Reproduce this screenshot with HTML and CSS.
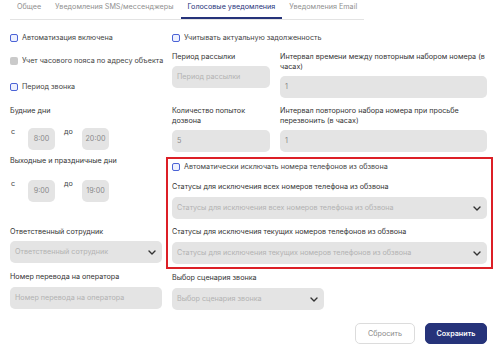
FILE: index.html
```html
<!DOCTYPE html>
<html lang="ru">
<head>
<meta charset="utf-8">
<link rel="stylesheet" href="styles.css">
</head>
<body>
<div class="page">
  <nav class="tabs">
    <div class="tab">Общее</div>
    <div class="tab">Уведомления SMS/мессенджеры</div>
    <div class="tab active">Голосовые уведомления</div>
    <div class="tab">Уведомления Email</div>
  </nav>

  <div class="content">
    <div class="col-left">
      <label class="cb-row r1"><span class="cb"></span>Автоматизация включена</label>
      <label class="cb-row r2"><span class="cb disabled"></span>Учет часового пояса по адресу объекта</label>
      <label class="cb-row r3"><span class="cb"></span>Период звонка</label>

      <div class="lbl days1">Будние дни</div>
      <div class="time-row tr1">
        <span class="t-lbl">с</span>
        <div class="time-box">8:00</div>
        <span class="t-lbl to">до</span>
        <div class="time-box">20:00</div>
      </div>

      <div class="lbl days2">Выходные и праздничные дни</div>
      <div class="time-row tr2">
        <span class="t-lbl">с</span>
        <div class="time-box">9:00</div>
        <span class="t-lbl to">до</span>
        <div class="time-box">19:00</div>
      </div>

      <div class="lbl resp">Ответственный сотрудник</div>
      <div class="field select">
        <span class="ph">Ответственный сотрудник</span>
        <svg class="chev" viewBox="0 0 8 5" width="8" height="5"><path d="M1 1 L4 4 L7 1" /></svg>
      </div>

      <div class="lbl oper">Номер перевода на оператора</div>
      <div class="field"><span class="ph">Номер перевода на оператора</span></div>
    </div>

    <div class="col-right">
      <label class="cb-row r1"><span class="cb"></span>Учитывать актуальную задолженность</label>

      <div class="pair rowA">
        <div class="fld">
          <div class="lbl">Период рассылки</div>
          <div class="field"><span class="ph">Период рассылки</span></div>
        </div>
        <div class="fld">
          <div class="lbl">Интервал времени между повторным набором номера (в часах)</div>
          <div class="field"><span class="val">1</span></div>
        </div>
      </div>

      <div class="pair rowB">
        <div class="fld">
          <div class="lbl">Количество попыток дозвона</div>
          <div class="field"><span class="val">5</span></div>
        </div>
        <div class="fld">
          <div class="lbl">Интервал повторного набора номера при просьбе перезвонить (в часах)</div>
          <div class="field"><span class="val">1</span></div>
        </div>
      </div>

      <div class="highlight">
        <label class="cb-row hl-cb"><span class="cb"></span>Автоматически исключать номера телефонов из обзвона</label>
        <div class="lbl hl-l1">Статусы для исключения всех номеров телефона из обзвона</div>
        <div class="field select">
          <span class="ph">Статусы для исключения всех номеров телефона из обзвона</span>
          <svg class="chev" viewBox="0 0 8 5" width="8" height="5"><path d="M1 1 L4 4 L7 1" /></svg>
        </div>
        <div class="lbl hl-l2">Статусы для исключения текущих номеров телефонов из обзвона</div>
        <div class="field select">
          <span class="ph">Статусы для исключения текущих номеров телефонов из обзвона</span>
          <svg class="chev" viewBox="0 0 8 5" width="8" height="5"><path d="M1 1 L4 4 L7 1" /></svg>
        </div>
      </div>

      <div class="lbl scen">Выбор сценария звонка</div>
      <div class="field select narrow">
        <span class="ph">Выбор сценария звонка</span>
        <svg class="chev" viewBox="0 0 8 5" width="8" height="5"><path d="M1 1 L4 4 L7 1" /></svg>
      </div>
    </div>
  </div>

  <div class="actions">
    <button class="btn btn-reset">Сбросить</button>
    <button class="btn btn-save">Сохранить</button>
  </div>
</div>
</body>
</html>
```

FILE: styles.css
```css
* { box-sizing: border-box; }

html, body {
  margin: 0;
  padding: 0;
  background: #ffffff;
}

body {
  font-family: Inter, "Noto Sans", "DejaVu Sans", sans-serif;
  font-size: 7.2px;
  line-height: 10px;
  color: #333333;
}

.page {
  padding: 0 12px 0 10px;
}

/* Tabs */
.tabs {
  display: flex;
  width: fit-content;
  border-bottom: 1px solid #e3e3e3;
}

.tab {
  padding: 2px 7px 7px;
  color: #8f8f8f;
  white-space: nowrap;
}

.tab.active {
  color: #26337a;
  box-shadow: inset 0 -2px 0 #26337a;
}

/* Columns */
.content {
  display: grid;
  grid-template-columns: 152px 315px;
  column-gap: 10px;
  align-items: start;
}

.col-left, .col-right {
  display: flex;
  flex-direction: column;
}

.lbl {
  color: #333333;
}

/* Checkbox rows */
.cb-row {
  display: flex;
  align-items: center;
  gap: 4px;
  height: 10px;
  color: #444444;
  white-space: nowrap;
}

.cb {
  width: 8px;
  height: 8px;
  border: 1.5px solid #4b63d6;
  border-radius: 2px;
  background: #eef1ff;
  flex: none;
}

.cb.disabled {
  border: none;
  background: #cacaca;
}

.col-left .r1 { margin-top: 13px; }
.col-left .r2 { margin-top: 13px; }
.col-left .r3 { margin-top: 16px; }

.days1 { margin-top: 14px; }
.tr1 { margin-top: 12px; }
.days2 { margin-top: 6px; }
.tr2 { margin-top: 14px; }
.resp { margin-top: 25px; }
.oper { margin-top: 9px; }

/* Time rows */
.time-row {
  display: flex;
  align-items: flex-start;
}

.t-lbl {
  width: 18px;
  padding-left: 1px;
  margin-top: -1px;
  color: #444444;
}

.t-lbl.to {
  width: 19px;
  margin-left: 8px;
  padding-left: 1px;
}

.time-box {
  width: 27px;
  height: 22px;
  border-radius: 5px;
  background: #e4e4e4;
  color: #8a8a8a;
  display: flex;
  align-items: center;
  justify-content: center;
}

/* Fields */
.field {
  height: 22px;
  border-radius: 5px;
  background: #e4e4e4;
  display: flex;
  align-items: center;
  padding: 0 6px 0 5px;
  margin-top: 4px;
  white-space: nowrap;
  overflow: hidden;
}

.ph {
  color: #b2b2b2;
  flex: 1;
}

.val {
  color: #8a8a8a;
}

.chev {
  flex: none;
  fill: none;
  stroke: #333333;
  stroke-width: 1.4;
  stroke-linecap: round;
  stroke-linejoin: round;
}

.narrow { width: 152px; }

/* Right column */
.col-right .r1 { margin-top: 13px; }

.pair {
  display: grid;
  grid-template-columns: 98px 207px;
  column-gap: 10px;
  align-items: start;
}

.fld {
  display: flex;
  flex-direction: column;
}

.rowA { margin-top: 9px; }
.rowB { margin-top: 8px; }

.highlight {
  margin: 5px -6px 0;
  padding: 3px 4px 3px;
  border: 2px solid #dc1f26;
  display: flex;
  flex-direction: column;
}

.hl-l1 { margin-top: 10px; }
.hl-l2 { margin-top: 8px; }
.highlight .field { margin-top: 5px; }

.scen { margin-top: 4px; }
.scen + .field { margin-top: 5px; }
.oper + .field { margin-top: 5px; }

/* Actions */
.actions {
  display: flex;
  justify-content: flex-end;
  gap: 10px;
  margin-top: 13px;
}

.btn {
  height: 21px;
  border-radius: 5px;
  font-family: inherit;
  font-size: 7.2px;
  line-height: 10px;
  padding: 0;
  cursor: pointer;
}

.btn-reset {
  width: 60px;
  background: #ffffff;
  border: 1px solid #dcdcdc;
  color: #8a8a8a;
}

.btn-save {
  width: 62px;
  background: #26337a;
  border: 1px solid #26337a;
  color: #ffffff;
  font-weight: 600;
}
```
